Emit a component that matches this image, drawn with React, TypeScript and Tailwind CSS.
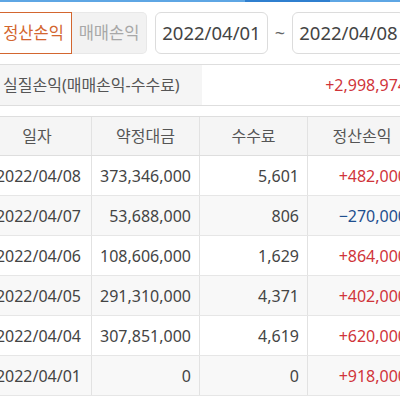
import React from "react";

const rows = [
  { d: "2022/04/08", a: "373,346,000", f: "5,601", p: "+482,000", neg: false },
  { d: "2022/04/07", a: "53,688,000", f: "806", p: "−270,000", neg: true },
  { d: "2022/04/06", a: "108,606,000", f: "1,629", p: "+864,000", neg: false },
  { d: "2022/04/05", a: "291,310,000", f: "4,371", p: "+402,000", neg: false },
  { d: "2022/04/04", a: "307,851,000", f: "4,619", p: "+620,000", neg: false },
  { d: "2022/04/01", a: "0", f: "0", p: "+918,000", neg: false },
];

export default function App() {
  return (
    <div
      className="w-[400px] h-[400px] overflow-hidden bg-white text-[16px] text-[#444]"
      style={{ fontFamily: '"Noto Sans", "Noto Sans CJK KR", sans-serif' }}
    >
      <div className="flex h-[2px]">
        <div className="w-[245px] bg-[#5ea6e4]" />
        <div className="w-[85px] bg-[#2f7fcf]" />
        <div className="flex-1 bg-[#5ea6e4]" />
      </div>
      <div className="flex items-center mt-[10px] h-[42px] -ml-[5px] w-[420px] shrink-0">
        <div className="w-[77px] h-full flex items-center justify-center border border-[#d3662f] bg-white text-[#d3662f] text-[16.5px] shrink-0">
          정산손익
        </div>
        <div className="w-[75px] h-full flex items-center justify-center bg-[#f2f2f2] border border-[#e8e8e8] border-l-0 rounded-r-[5px] text-[#a8a8a8] text-[16.5px] shrink-0">
          매매손익
        </div>
        <div className="ml-[8px] w-[113px] h-full flex items-center justify-center border border-[#dcdcdc] rounded-[6px] text-[#444] text-[18.5px] shrink-0">
          2022/04/01
        </div>
        <div className="w-[24px] text-center text-[#666] text-[18px] shrink-0">~</div>
        <div className="w-[113px] h-full flex items-center justify-center border border-[#dcdcdc] rounded-[6px] text-[#444] text-[18.5px] shrink-0">
          2022/04/08
        </div>
      </div>
      <div className="-ml-[17px] w-[433px] mt-[10px] h-[42px] flex border-y border-[#dedede]">
        <div className="w-[219px] bg-[#f5f5f5] flex items-center pl-[20px] text-[#555]">
          실질손익(매매손익-수수료)
        </div>
        <div className="flex-1 flex items-center justify-end pr-[9px] text-[#d0343a]">
          +2,998,974
        </div>
      </div>
      <div className="-ml-[17px] w-[433px] mt-[10px]">
        <div className="grid grid-cols-[109px_108px_108px_108px] h-[40px] bg-[#f5f5f5] border-y border-[#dedede] text-[#555]">
          {["일자", "약정대금", "수수료", "정산손익"].map((h, i) => (
            <div
              key={h}
              className={`flex items-center justify-center ${i < 3 ? "border-r border-[#e2e2e2]" : ""}`}
            >
              {h}
            </div>
          ))}
        </div>
        {rows.map((r, idx) => (
          <div
            key={r.d}
            className={`grid grid-cols-[109px_108px_108px_108px] h-[40px] border-b border-[#e6e6e6] ${
              idx % 2 === 1 ? "bg-[#f8f8f8]" : "bg-white"
            }`}
          >
            <div className="flex items-center justify-end pr-[10px] border-r border-[#e2e2e2]">{r.d}</div>
            <div className="flex items-center justify-end pr-[8px] border-r border-[#e2e2e2]">{r.a}</div>
            <div className="flex items-center justify-end pr-[8px] border-r border-[#e2e2e2]">{r.f}</div>
            <div
              className={`flex items-center justify-end pr-[9px] ${
                r.neg ? "text-[#1f4f8f]" : "text-[#d0343a]"
              }`}
            >
              {r.p}
            </div>
          </div>
        ))}
      </div>
    </div>
  );
}
